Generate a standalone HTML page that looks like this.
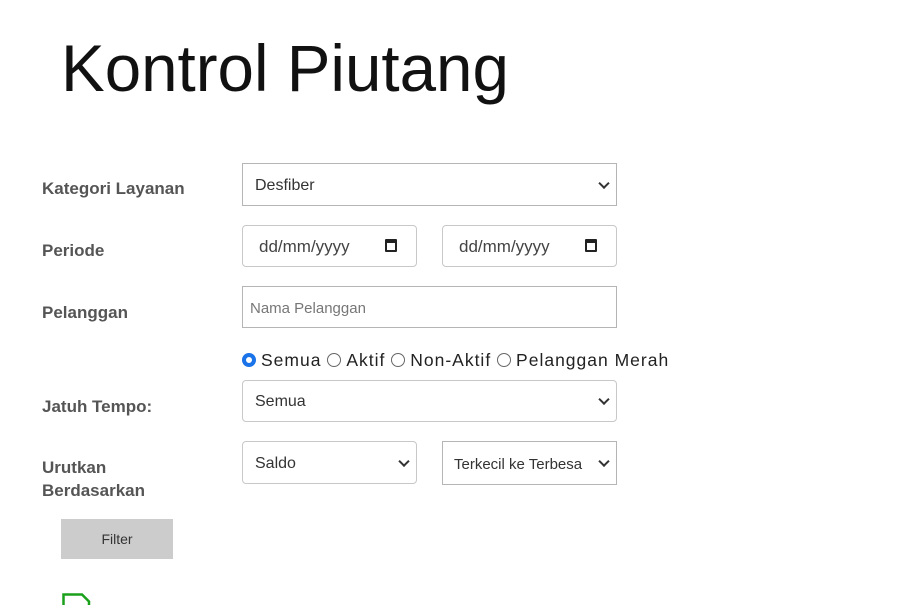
<!DOCTYPE html>
<html><head><style>
body{margin:0;width:897px;height:603px;background:#fff;font-family:"Liberation Sans",sans-serif;position:relative;overflow:hidden}
.a{position:absolute}
h1{position:absolute;left:61px;top:29px;margin:0;font-weight:normal;font-size:65.5px;color:#111;letter-spacing:0px;line-height:80px}
.lbl{position:absolute;left:42px;font-size:17px;font-weight:bold;color:#555;line-height:23px}
.box{position:absolute;box-sizing:border-box;border:1px solid #b5b5b5;background:#fff;font-size:16px;color:#333;padding-left:12px;padding-top:2px;display:flex;align-items:center}
.r{border-radius:4px;border-color:#c8c8c8}
.chev{position:absolute;right:8px;top:50%;width:6px;height:6px;border-right:2px solid #333;border-bottom:2px solid #333;transform:translateY(-70%) rotate(45deg)}
.cal{position:absolute;right:19px;top:13px;width:12px;height:13px;border:2px solid #222;border-top-width:4px;box-sizing:border-box;border-radius:1px}
.rad{display:inline-block;width:14px;height:14px;border:1px solid #666;border-radius:50%;box-sizing:border-box;vertical-align:-1px;margin-right:5px}
</style></head><body>
<h1>Kontrol Piutang</h1>
<div class="lbl" style="top:177px">Kategori Layanan</div>
<div class="box" style="left:242px;top:163px;width:375px;height:43px">Desfiber<span class="chev"></span></div>
<div class="lbl" style="top:239px">Periode</div>
<div class="box r" style="left:242px;top:225px;width:175px;height:42px;font-size:17px;color:#444;padding-left:16px">dd/mm/yyyy<span class="cal"></span></div>
<div class="box r" style="left:442px;top:225px;width:175px;height:42px;font-size:17px;color:#444;padding-left:16px">dd/mm/yyyy<span class="cal"></span></div>
<div class="lbl" style="top:301px">Pelanggan</div>
<div class="box" style="left:242px;top:286px;width:375px;height:42px;color:#777;padding-left:7px;font-size:15px">Nama Pelanggan</div>
<div class="a" style="left:242px;top:350px;font-size:17.5px;color:#222;letter-spacing:1px;word-spacing:0px"><span class="rad" style="border:4px solid #1a73e8"></span>Semua <span class="rad"></span>Aktif <span class="rad"></span>Non-Aktif <span class="rad"></span>Pelanggan Merah</div>
<div class="lbl" style="top:395px">Jatuh Tempo:</div>
<div class="box r" style="left:242px;top:380px;width:375px;height:42px">Semua<span class="chev"></span></div>
<div class="lbl" style="top:456px">Urutkan<br>Berdasarkan</div>
<div class="box r" style="left:242px;top:441px;width:175px;height:43px">Saldo<span class="chev"></span></div>
<div class="box" style="left:442px;top:441px;width:175px;height:44px;font-size:15px;padding-left:11px">Terkecil ke Terbesa<span class="chev"></span></div>
<div class="a" style="left:61px;top:519px;width:112px;height:40px;background:#ccc;font-size:14px;color:#333;display:flex;align-items:center;justify-content:center">Filter</div>
<svg class="a" style="left:62px;top:593px" width="30" height="12"><path d="M1.5 12V1.5H20L27 8.5V12" fill="none" stroke="#1aa01a" stroke-width="2.5"/></svg>
</body></html>
